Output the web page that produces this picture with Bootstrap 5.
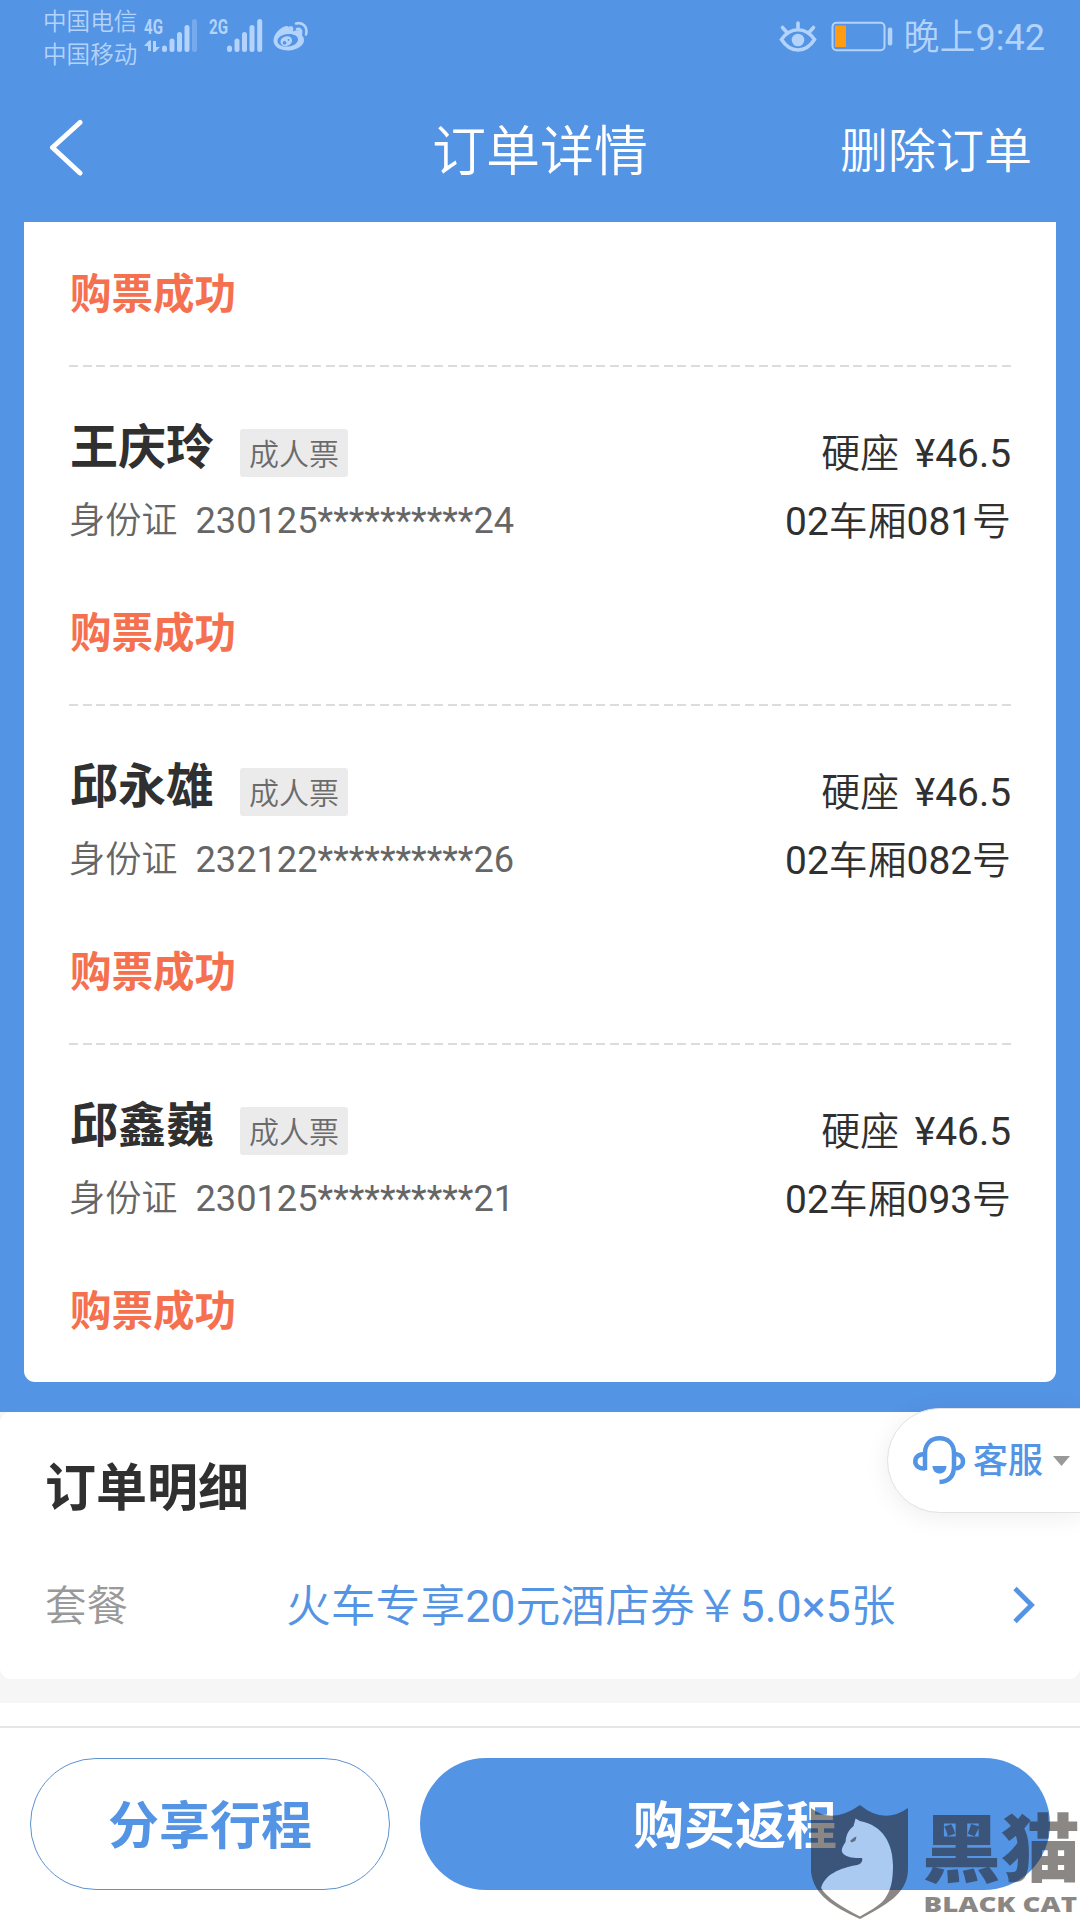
<!DOCTYPE html>
<html lang="zh-CN">
<head>
<meta charset="utf-8">
<meta name="viewport" content="width=device-width, initial-scale=1">
<title>订单详情</title>
<link href="https://cdn.jsdelivr.net/npm/bootstrap@5.3.0/dist/css/bootstrap.min.css" rel="stylesheet">
<style>
:root{--sky:#5494e5;--pale:#b3d3fb;--coral:#f5704f;--ink:#303030}
body{font-family:Roboto,"Noto Sans CJK SC",sans-serif;background:#fff;color:var(--ink);width:1080px;height:1920px;overflow:hidden}
.thin{font-family:Roboto,"Noto Sans CJK SC DemiLight","Noto Sans CJK SC Light","Noto Sans CJK SC",sans-serif}
svg{display:block;flex:none}
.hero{background:var(--sky);height:1412px}
.statusbar{height:76px;padding:0 35px 0 43px;color:var(--pale)}
.carriers{font-size:23.6px;line-height:33px;padding-top:6px;width:99px;white-space:nowrap}
.clock{font-size:36px;line-height:42px;padding-top:17px}
.titlebar{height:146px;display:grid;grid-template-columns:1fr auto 1fr;align-items:center;padding:0 48px 0 50px;color:#fff}
.titlebar svg{margin-top:-2px}
.titlebar h1{font-size:54px;font-weight:400;line-height:64px;margin:7px 2px 0 0}
.titlebar a{font-size:48px;line-height:60px;margin-top:5px}
.tickets{margin:0 24px;height:1160px;border-radius:0 0 11px 11px;padding:0 45px}
.state{height:143px;line-height:145px;font-size:41.5px;font-weight:700;color:var(--coral);padding-left:1px}
.passenger{height:196px;padding-top:53px;background:repeating-linear-gradient(90deg,#dcdcdc 0 9px,transparent 9px 13.52px) 0 0/100% 2px no-repeat}
.who{font-size:48px;line-height:60px;font-weight:700;padding-left:1px}
.kind{font-size:30px;line-height:51px;height:48px;margin:11px 0 0 26px;padding:0 9px;background:#ebebeb;color:#6b6b6b;border-radius:3px}
.idno{font-size:36.2px;line-height:44px;margin-top:21px;color:#666;white-space:pre}
.seat{font-size:38.9px;line-height:46px;padding-top:13px}
.seat div:first-child{word-spacing:6px}
.seat div+div{margin-top:22px}
.detail{height:267px;border-radius:11px;padding:47px 45px 0 45px}
.detail h2{font-size:51px;line-height:60px;font-weight:700;margin:0}
.package{margin-top:60px;line-height:56px}
.package svg{margin-top:-5px}
.package .tag{font-size:41.5px;color:#999;width:241px}
.package .offer{font-size:44.8px;color:var(--sky)}
.gap-band{background:#f6f6f6}
.actions{border-top:2px solid #e6e6e6;margin-top:23px;padding:30px;gap:30px}
.actions .btn{height:132px;font-size:51px;font-weight:700;line-height:132px;padding:2px 0 0;border-width:1px}
.share{width:360px;color:var(--sky);border-color:#5c92cf}
.buy{width:630px;color:#fff;background:var(--sky)}
.service{position:absolute;right:-2px;top:1408px;width:195px;height:105px;border-radius:53px 0 0 53px;background:#fff;border:1px solid #e2e2e2;box-shadow:0 4px 26px rgba(0,0,0,.07);padding-left:25px;color:var(--sky);font-size:35px;font-weight:500}
.service span{margin:3px 10px 0 7px}
.watermark{position:absolute;left:780px;top:1790px;pointer-events:none}
</style>
<script src="https://cdn.jsdelivr.net/npm/bootstrap@5.3.0/dist/js/bootstrap.bundle.min.js"></script>
</head>
<body class="position-relative">
<div class="gap-band" style="height:1703px">
<header class="hero">
  <div class="statusbar d-flex justify-content-between">
    <div class="d-flex">
      <div class="carriers thin"><div>中国电信</div><div>中国移动</div></div>
      <svg width="170" height="76" viewBox="142 0 170 76" fill="#b3d3fb">
        <text x="144" y="34" font-size="20.5" font-weight="700" textLength="19" lengthAdjust="spacingAndGlyphs">4G</text>
        <text x="209" y="34" font-size="20.5" font-weight="700" textLength="19" lengthAdjust="spacingAndGlyphs">2G</text>
        <path d="M144 46l5-5.500h2V51h-3v-5zM153 41h3v6h4l-5 5h-2z"/>
        <g stroke="#b3d3fb" stroke-width="5" stroke-linecap="round">
          <path d="M164.500 48v1.500M172 41v8.500M179.500 34.500v15M187 27.500v22M229.500 48v1.500M237 41v8.500M244.500 34.500v15M252 27.500v22M259.700 21.500v28"/>
          <path d="M194.500 21.500v28" opacity=".35"/>
        </g>
        <path fill-rule="evenodd" d="M289 26.500c4-1 5 1 4 5 4-2 10-2 9 3-.3 1 1 2 1.500 3 3 8-8 13-15 13-9 0-15-4-15-10 0-7 8-14 13-14.500 2.500 0 3 2 2.500 4zM288 34c-6 .3-10.500 3.500-10.500 7s4.500 6 10.500 5.500 10-3.500 10-7-4-5.800-10-5.500z"/>
        <path fill-rule="evenodd" d="M285.500 36.500c4-1 6.500 1 6.500 4s-3 5.500-6.500 5.500-5-2-5-4.500 2-4.500 5-5zm-1 4.500a1.800 1.800 0 1 0 .1 0zm4-2a.9.9 0 1 0 .1 0z"/>
        <path d="M296 23.500c7-2 12 4 10 11M297 29c3-.5 5 1.500 4 4.500" fill="none" stroke="#b3d3fb" stroke-width="2.600" stroke-linecap="round"/>
      </svg>
    </div>
    <div class="d-flex">
      <svg width="126" height="76" viewBox="778 0 126 76">
        <g fill="none" stroke="#b3d3fb" stroke-width="3.600" stroke-linecap="round">
          <path d="M781.500 39.500c9-13 24-13 33 0-9 14-24 14-33 0zM782.500 27.500l4.500 5M798 23v6M813.500 27.500l-4.500 5"/>
        </g>
        <circle cx="798" cy="40" r="6.300" fill="#b3d3fb"/>
        <rect x="832.500" y="22.700" width="52" height="27.500" rx="4" fill="none" stroke="#b3d3fb" stroke-width="2"/>
        <rect x="835" y="25.500" width="11" height="21.500" fill="#ff9c12"/>
        <rect x="887.800" y="27.500" width="4.500" height="18" rx="2" fill="#b3d3fb"/>
      </svg>
      <div class="clock thin">晚上9:42</div>
    </div>
  </div>
  <nav class="titlebar thin">
    <svg width="34" height="58" viewBox="50 118 34 58"><path d="M80 121.500L52.500 146.500L80 172" fill="none" stroke="#fff" stroke-width="5" stroke-linecap="round" stroke-linejoin="round"/></svg>
    <h1>订单详情</h1>
    <a class="text-white text-decoration-none text-end">删除订单</a>
  </nav>
  <main class="tickets bg-white">
    <div class="state">购票成功</div>
    <section class="passenger d-flex justify-content-between">
      <div><div class="d-flex"><div class="who">王庆玲</div><div class="kind thin">成人票</div></div><div class="idno thin">身份证  230125**********24</div></div>
      <div class="seat thin text-end"><div>硬座 ¥46.5</div><div>02车厢081号</div></div>
    </section>
    <div class="state">购票成功</div>
    <section class="passenger d-flex justify-content-between">
      <div><div class="d-flex"><div class="who">邱永雄</div><div class="kind thin">成人票</div></div><div class="idno thin">身份证  232122**********26</div></div>
      <div class="seat thin text-end"><div>硬座 ¥46.5</div><div>02车厢082号</div></div>
    </section>
    <div class="state">购票成功</div>
    <section class="passenger d-flex justify-content-between">
      <div><div class="d-flex"><div class="who">邱鑫巍</div><div class="kind thin">成人票</div></div><div class="idno thin">身份证  230125**********21</div></div>
      <div class="seat thin text-end"><div>硬座 ¥46.5</div><div>02车厢093号</div></div>
    </section>
    <div class="state">购票成功</div>
  </main>
</header>
<section class="detail bg-white">
  <h2>订单明细</h2>
  <div class="package thin d-flex align-items-center">
    <div class="tag">套餐</div>
    <div class="offer">火车专享20元酒店券￥5.0×5张</div>
    <svg class="ms-auto" width="22" height="38" viewBox="0 0 22 38"><path d="M2 2.500L18.500 19L2 35.500" fill="none" stroke="#5494e5" stroke-width="4.800"/></svg>
  </div>
</section>
</div>
<footer class="actions d-flex">
  <button class="btn share rounded-pill">分享行程</button>
  <button class="btn buy rounded-pill">购买返程</button>
</footer>
<aside class="service d-flex align-items-center">
  <svg width="53" height="50" viewBox="0 0 53 50" fill="none" stroke="#5494e5" stroke-width="4.500">
    <path d="M12 34V17C12 8 18 2.300 26.500 2.300S41 8 41 17V30C41 40 36 45.500 26.500 46M12 18C5 18 2.300 21.500 2.300 25.500S6 33 12 32.500M41 18C47 18 50 21.500 50 25.500S47 32.500 41 32.500"/>
    <path d="M19.500 30h14c0 10-14 10-14 0z" fill="#5494e5" stroke="none"/>
  </svg>
  <span>客服</span>
  <svg width="17" height="10" viewBox="0 0 17 10"><path d="M0 0h17L8.500 10z" fill="#999"/></svg>
</aside>
<svg class="watermark" width="300" height="130" viewBox="0 0 300 130">
  <path fill="#fff" opacity=".5" d="M41 98C47 108 62 117 80 126.500C93 119 102 114 106 107C111 99 113 91 113 76C113 54 103 35 80 31L75.500 28.500L73.500 36C67 41 66 47 65.500 52C62 57 61 60 62.500 63C67 68 74 68 82 68C83 71 81 74 77 75C60 78 45 84 41 98Z"/>
  <g fill="#241e1a" opacity=".53">
    <path fill-rule="evenodd" d="M31 18Q52 35 80 15Q104 35 128 18V80C127 105 105 115 80 129C52 116 34 105 31 82ZM41 98C47 108 62 117 80 126.500C93 119 102 114 106 107C111 99 113 91 113 76C113 54 103 35 80 31L75.500 28.500L73.500 36C67 41 66 47 65.500 52C62 57 61 60 62.500 63C67 68 74 68 82 68C83 71 81 74 77 75C60 78 45 84 41 98Z"/>
    <path d="M70 51l4-3.500 2.500-1-1 4-3.500 2z"/>
    <text x="142" y="86" font-family="Noto Sans CJK SC" font-weight="900" font-size="74" textLength="158" lengthAdjust="spacingAndGlyphs">黑猫</text>
    <text x="143.500" y="122" font-family="Open Sans" font-weight="800" font-size="21" textLength="153.500" lengthAdjust="spacingAndGlyphs">BLACK CAT</text>
  </g>
</svg>
</body>
</html>
